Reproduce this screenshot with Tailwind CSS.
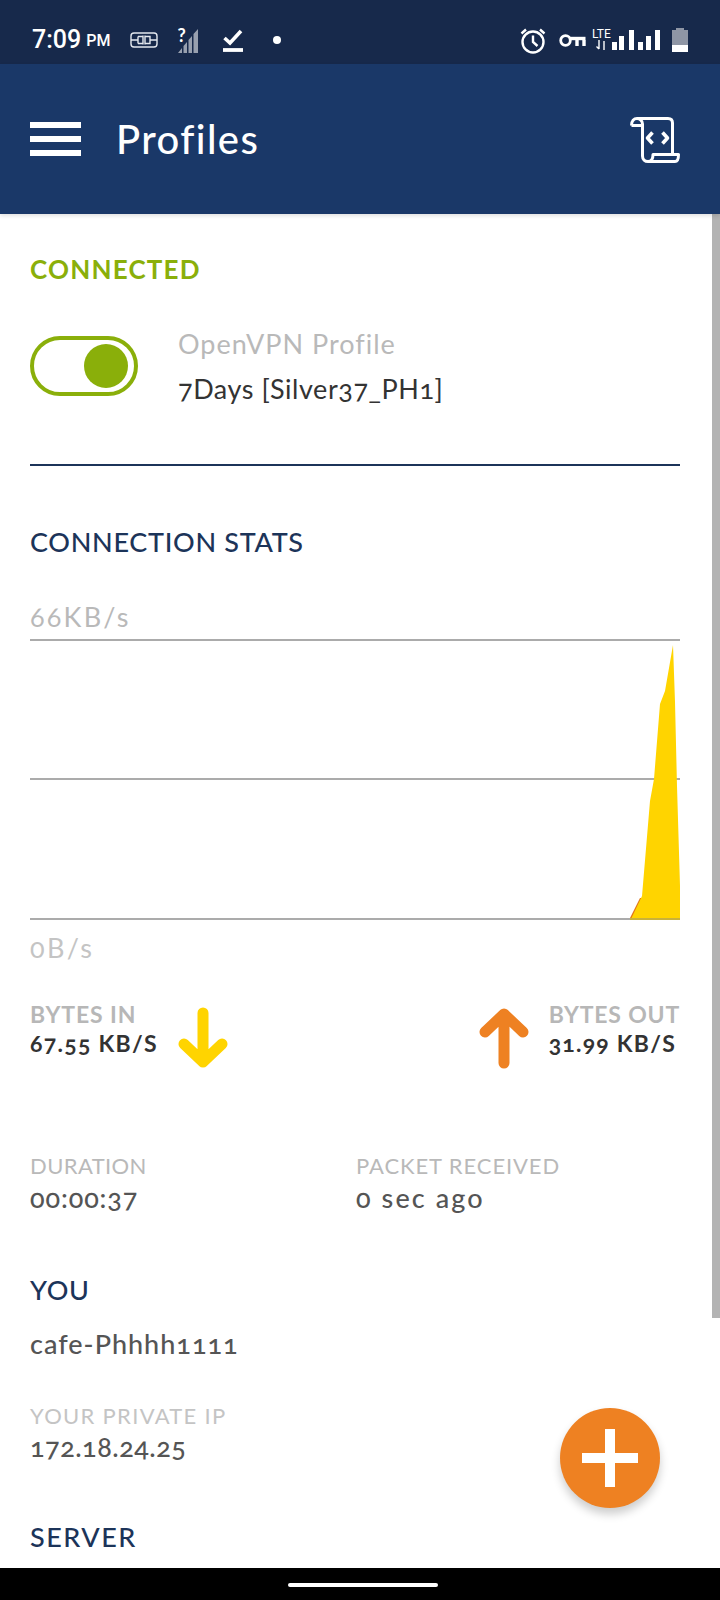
<!DOCTYPE html>
<html lang="en">
<head>
    <meta charset="UTF-8">
    <meta name="viewport" content="width=device-width, initial-scale=1.0">
    <title>Profiles</title>
    <script src="https://cdn.jsdelivr.net/npm/@tailwindcss/browser@4"></script>
</head>
<body class="bg-white">
<div class="relative w-[720px] h-[1600px] overflow-hidden flex flex-col bg-white font-['Lato',sans-serif] oldstyle-nums">

    <!-- Status bar -->
    <div class="h-[64px] shrink-0 bg-[#17294b] flex items-center text-white pl-[32px] pr-[32px] pt-[16px] lining-nums">
        <span class="text-[25px] font-medium font-['Roboto',sans-serif] leading-none mt-[-2px]">7:09</span>
        <span class="text-[16px] font-medium font-['Roboto',sans-serif] ml-[5px] mt-[2px]">PM</span>
        <svg class="ml-[20px]" width="28" height="16" viewBox="0 0 28 16" fill="none" stroke="#e4e8ef" stroke-width="1.400"><rect x="1" y="1" width="26" height="14" rx="3"/><path d="M1 8h7M20 8h7M8 4.500h5M8 11.500h5M8 4.500v7M13 3.500v9M15 3.500v9M15 4.500h5v7h-5"/></svg>
        <div class="relative w-[22px] h-[25px] ml-[19px]">
            <svg width="22" height="25" viewBox="0 0 22 25" fill="#98a0af"><path d="M1 25L5 20V25ZM6.500 25V18L10 14V25ZM11.500 25V12L15 8V25ZM16.500 25V6L21 1V25Z"/></svg>
            <span class="absolute left-0 top-[-3px] text-[18px] font-bold leading-[20px]">?</span>
        </div>
        <svg class="ml-[23px]" width="22" height="26" viewBox="0 0 22 26" fill="none" stroke="#fff"><path d="M2.500 11l5.500 5L19 4" stroke-width="3.600"/><path d="M1 23h20" stroke-width="3.800"/></svg>
        <div class="w-[8px] h-[8px] rounded-full bg-white ml-[29px]"></div>

        <svg class="ml-auto" width="26" height="27" viewBox="0 0 26 27" fill="none" stroke="#fff" stroke-width="2.400"><circle cx="13" cy="15" r="10.500"/><path d="M13 8.500V15l4.500 4M1.500 6.500L6 2.500M24.500 6.500L20 2.500"/></svg>
        <svg class="ml-[13px]" width="27" height="15" viewBox="0 0 27 15" fill="none" stroke="#fff"><circle cx="6.500" cy="7.500" r="4.800" stroke-width="2.800"/><path d="M11 5.500H26.500" stroke-width="3.400"/><path d="M18 7v6M25 7v6" stroke-width="3.400"/></svg>
        <div class="relative w-[19px] h-[20px] ml-[6px]">
            <span class="absolute left-0 top-[-2px] text-[12px] leading-[13px] font-['Roboto',sans-serif]">LTE</span>
            <svg class="absolute left-[4px] top-[10px]" width="11" height="10" viewBox="0 0 11 10" fill="none" stroke="#fff" stroke-width="1.400"><path d="M3 0v9M0.500 6.500L3 9M8 10V1"/></svg>
        </div>
        <svg class="ml-[1px]" width="49" height="20" viewBox="0 0 49 20" fill="#fff"><rect x="0" y="12" width="5" height="8"/><rect x="7" y="6" width="5" height="14"/><rect x="17" y="0" width="5" height="20"/><rect x="26" y="12" width="5" height="8"/><rect x="34" y="6" width="5" height="14"/><rect x="43" y="0" width="5" height="20"/></svg>
        <div class="ml-[11px] w-[16px] h-[24px] flex flex-col items-center">
            <div class="w-[8px] h-[2px] bg-[#8f96a5]"></div>
            <div class="w-[16px] h-[15px] bg-[#8f96a5]"></div>
            <div class="w-[16px] h-[7px] bg-white"></div>
        </div>
    </div>

    <!-- App bar -->
    <div class="h-[150px] shrink-0 bg-[#1a3868] flex items-center pl-[30px] pr-[40px] shadow-[0_2px_4px_rgba(0,0,0,0.12)] relative z-10">
        <div class="w-[51px] flex flex-col gap-[8px]">
            <div class="h-[6px] bg-white"></div>
            <div class="h-[6px] bg-white"></div>
            <div class="h-[6px] bg-white"></div>
        </div>
        <h1 class="ml-[35px] text-[40px] tracking-[1.400px] font-medium text-white leading-none">Profiles</h1>
        <svg class="ml-auto mt-[2px]" width="50" height="46" viewBox="0 0 50 46" fill="none" stroke="#fff" stroke-width="3" stroke-linejoin="round"><path d="M1.500 8.500C1.500 4 4 1.500 7 1.500H38C41 1.500 42.500 3 42.500 6V37"/><path d="M1.500 8.500H12.500"/><path d="M7 1.500C10 1.500 12.500 4 12.500 7V39C12.500 42.500 15 44.500 18 44.500H45C47.500 44.500 48.500 42 48.500 37.500H23C23 42 21.500 44.500 18 44.500"/><path d="M22.500 15.500L17.500 21L22.500 26.500M32.500 15.500L37.500 21L32.500 26.500" stroke-width="3.600"/></svg>
    </div>

    <!-- Content -->
    <div class="relative flex-1 overflow-hidden pl-[30px] pr-[40px]">
        <div class="absolute right-0 top-0 w-[8px] h-[1104px] bg-[#b3b3b3]"></div>

        <div class="pt-[40px] text-[26px] tracking-[1.200px] font-bold leading-[30px] text-[#8aaf0a]">CONNECTED</div>

        <div class="mt-[37px] flex items-center h-[90px]">
            <div class="w-[108px] h-[60px] rounded-full border-[4px] border-[#8aaf0a] flex items-center justify-end pr-[6px]">
                <div class="w-[44px] h-[44px] rounded-full bg-[#8aaf0a]"></div>
            </div>
            <div class="ml-[40px]">
                <div class="text-[27px] tracking-[1px] leading-[30px] text-[#b9b9b9]">OpenVPN Profile</div>
                <div class="mt-[15px] text-[27px] tracking-[0.550px] leading-[30px] text-[#333333]">7Days [Silver37_PH1]</div>
            </div>
        </div>

        <div class="mt-[53px] h-[2px] bg-[#1c3459]"></div>

        <div class="mt-[61px] text-[27px] tracking-[0.700px] font-medium leading-[30px] text-[#1c3459]">CONNECTION STATS</div>

        <div class="mt-[45px] text-[27px] tracking-[2.200px] leading-[30px] text-[#b9b9b9]">66KB/s</div>
        <svg class="block mt-[7px]" width="650" height="281" viewBox="0 0 650 281">
            <rect x="0" y="0" width="650" height="2" fill="#ababab"/>
            <rect x="0" y="139" width="650" height="2" fill="#ababab"/>
            <path d="M600 279 L610 259 L613 259 L606 279 Z" fill="#e0761a"/>
            <path d="M601 280 L612 257 L620 162 L624 140 L630 65 L635 52 L643 6 L645 63 L647 147 L650 247 V280 Z" fill="#ffd400"/>
            <rect x="0" y="279" width="600" height="2" fill="#ababab"/>
            <rect x="600" y="279" width="50" height="2" fill="#c9b23a"/>
        </svg>
        <div class="mt-[13px] text-[27px] tracking-[2.300px] leading-[30px] text-[#c4c4c4]">0B/s</div>

        <div class="mt-[38px] flex items-start justify-between h-[68px]">
            <div class="flex items-start">
                <div>
                    <div class="text-[23px] tracking-[0.900px] font-bold leading-[26px] text-[#b7b7b7]">BYTES IN</div>
                    <div class="mt-[2px] text-[23px] tracking-[1.300px] font-bold leading-[28px] text-[#333333]">67.55 KB/S</div>
                </div>
                <svg class="ml-[20px] mt-[6px]" width="50" height="62" viewBox="0 0 50 62" fill="none" stroke="#ffd400" stroke-width="11" stroke-linecap="round" stroke-linejoin="round"><path d="M25 6V55M6 37L25 55L44 37"/></svg>
            </div>
            <div class="flex items-start">
                <svg class="mr-[20px] mt-[6px]" width="50" height="62" viewBox="0 0 50 62" fill="none" stroke="#ee8122" stroke-width="11" stroke-linecap="round" stroke-linejoin="round"><path d="M25 56V7M6 25L25 7L44 25"/></svg>
                <div>
                    <div class="text-[23px] tracking-[0.800px] font-bold leading-[26px] text-[#b7b7b7]">BYTES OUT</div>
                    <div class="mt-[2px] text-[23px] tracking-[1.250px] font-bold leading-[28px] text-[#333333]">31.99 KB/S</div>
                </div>
            </div>
        </div>

        <div class="mt-[83px] flex">
            <div class="w-[326px]">
                <div class="text-[22px] tracking-[0.400px] leading-[28px] text-[#b9b9b9]">DURATION</div>
                <div class="mt-[3px] text-[27px] tracking-[0.900px] font-medium leading-[30px] text-[#555555]">00:00:37</div>
            </div>
            <div>
                <div class="text-[22px] tracking-[0.900px] leading-[28px] text-[#b9b9b9]">PACKET RECEIVED</div>
                <div class="mt-[3px] text-[27px] tracking-[2.100px] font-medium leading-[30px] text-[#555555]">0 sec ago</div>
            </div>
        </div>

        <div class="mt-[62px] text-[27px] tracking-[0.700px] font-medium leading-[30px] text-[#1c3459]">YOU</div>
        <div class="mt-[24px] text-[27px] tracking-[1px] font-medium leading-[30px] text-[#555555]">cafe-Phhhh1111</div>
        <div class="mt-[43px] text-[22px] tracking-[1.300px] leading-[28px] text-[#c4c4c4]">YOUR PRIVATE IP</div>
        <div class="mt-[2px] text-[27px] tracking-[0.500px] font-medium leading-[30px] text-[#555555]">172.18.24.25</div>
        <div class="mt-[60px] text-[27px] tracking-[1.500px] font-medium leading-[30px] text-[#1c3459]">SERVER</div>

        <!-- Add button -->
        <div class="absolute left-[560px] top-[1194px] w-[100px] h-[100px] rounded-full bg-[#ee8122] flex items-center justify-center shadow-[0_6px_10px_rgba(0,0,0,0.2)]">
            <svg width="56" height="58" viewBox="0 0 56 58" fill="#fff"><rect x="23" y="0" width="10" height="58"/><rect x="0" y="24" width="56" height="10"/></svg>
        </div>
    </div>

    <!-- Navigation bar -->
    <div class="h-[32px] shrink-0 bg-black flex items-center justify-center">
        <div class="w-[150px] h-[4px] rounded-full bg-white mt-[2px] ml-[6px]"></div>
    </div>
</div>
</body>
</html>
